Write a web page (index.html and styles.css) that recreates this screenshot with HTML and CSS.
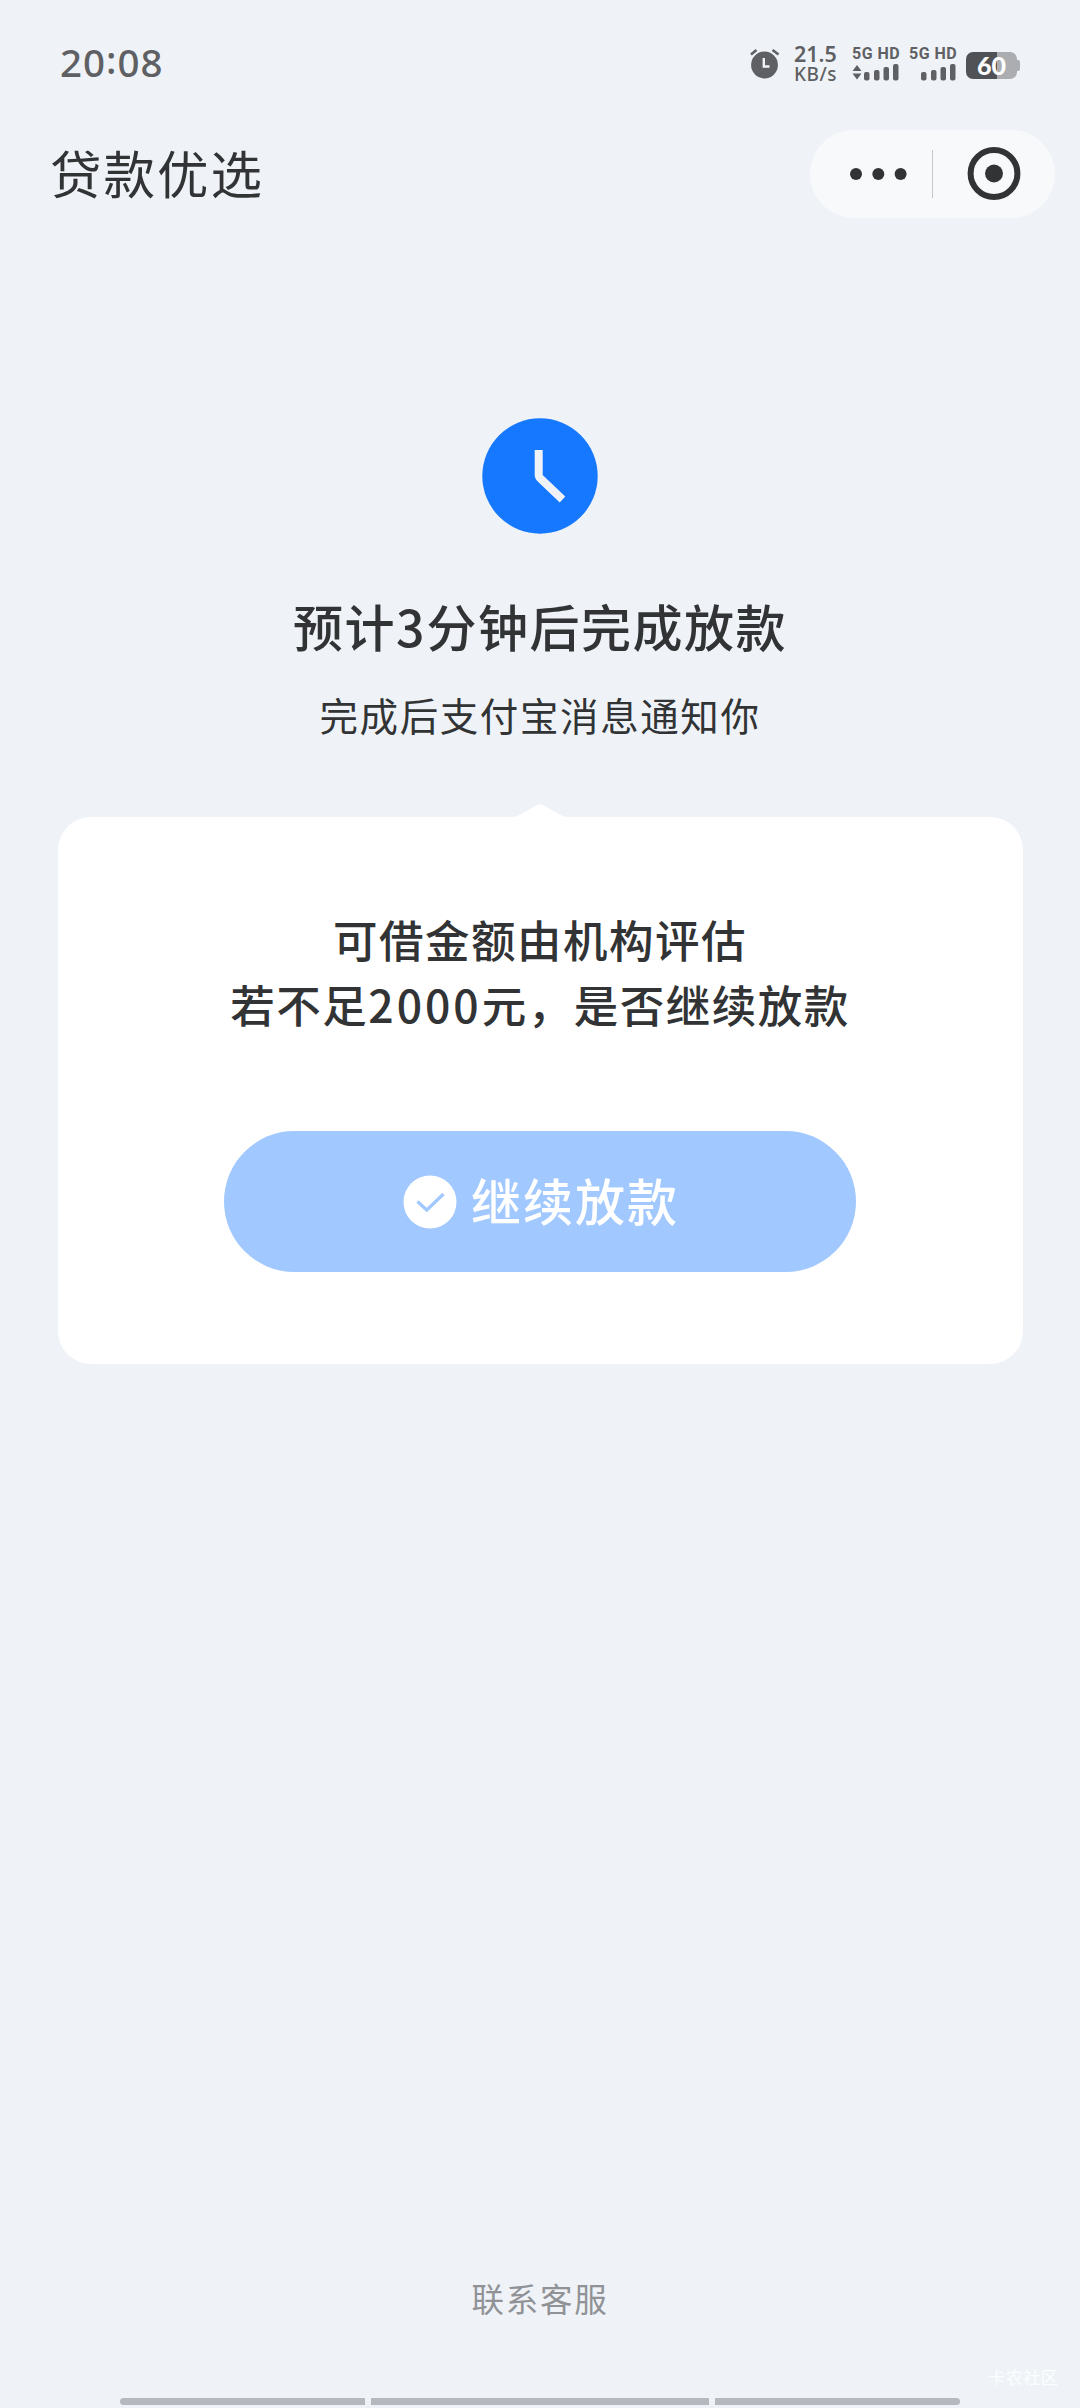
FILE: index.html
```html
<!DOCTYPE html>
<html lang="zh-CN">
<head>
<meta charset="utf-8">
<title>贷款优选</title>
<link rel="stylesheet" href="styles.css">
</head>
<body>
<div class="screen">
  <header class="status">
    <span class="time">20<span class="colon">:</span>08</span>
    <div class="indicators">
      <svg class="alarm" width="30" height="30" viewBox="0 0 30 30">
        <circle cx="14.500" cy="16" r="13.400" fill="#5f6063"/>
        <path d="M1 5.500 L6.500 1 M22.500 1 L28.500 5.500" stroke="#5f6063" stroke-width="2.600" fill="none"/>
        <path d="M13.800 9 V17.500 H19.500" stroke="#eff3f8" stroke-width="2.400" fill="none"/>
      </svg>
      <div class="speed"><span class="rate">21.5</span><span class="unit">KB/s</span></div>
      <div class="sim">
        <span class="net">5G HD</span>
        <svg width="48" height="18" viewBox="0 0 48 18" fill="#5f6063">
          <path d="M0.500 8 L5 2 L9.500 8 Z M0.500 10.500 L5 16.500 L9.500 10.500 Z"/>
          <rect x="12" y="9" width="5.500" height="8.500" rx="2"/><rect x="22" y="7" width="5.500" height="10.500" rx="2"/><rect x="31.500" y="4" width="5.500" height="13.500" rx="2"/><rect x="41" y="1" width="5.500" height="16.500" rx="2"/>
        </svg>
      </div>
      <div class="sim second">
        <span class="net">5G HD</span>
        <svg width="48" height="18" viewBox="0 0 48 18" fill="#5f6063">
          <rect x="12" y="9" width="5.500" height="8.500" rx="2"/><rect x="22" y="7" width="5.500" height="10.500" rx="2"/><rect x="31.500" y="4" width="5.500" height="13.500" rx="2"/><rect x="41" y="1" width="5.500" height="16.500" rx="2"/>
        </svg>
      </div>
      <div class="battery"><span class="cell">60</span><span class="tip"></span></div>
    </div>
  </header>

  <nav class="titlebar">
    <h1 class="title">贷款优选</h1>
    <div class="capsule">
      <svg width="57" height="12" viewBox="0 0 57 12" fill="#323335"><circle cx="6" cy="6" r="6"/><circle cx="28.300" cy="6" r="6"/><circle cx="50.600" cy="6" r="6"/></svg>
      <span class="divider"></span>
      <svg width="54" height="54" viewBox="0 0 54 54"><circle cx="27" cy="26.500" r="23.400" fill="none" stroke="#323335" stroke-width="6"/><circle cx="27" cy="26.500" r="9" fill="#323335"/></svg>
    </div>
  </nav>

  <main class="content">
    <svg class="clock" width="116" height="116" viewBox="0 0 116 116">
      <circle cx="58" cy="58" r="57.700" fill="#1677ff"/>
      <path d="M56.700 32 V57 Q56.700 59 58.500 60.500 L80.500 81.500" fill="none" stroke="#eff3f8" stroke-width="8"/>
    </svg>
    <h2 class="headline">预计<span class="digit">3</span>分钟后完成放款</h2>
    <p class="sub">完成后支付宝消息通知你</p>
    <svg class="pointer" width="52" height="13" viewBox="0 0 50 13" preserveAspectRatio="none"><path d="M0 13 Q4 12 8 9.500 L22 1 Q25 -0.500 28 1 L42 9.500 Q46 12 50 13 Z" fill="#fff"/></svg>
    <section class="card">
      <p class="question">可借金额由机构评估<br>若不足<span class="amount">2000</span>元，是否继续放款</p>
      <button class="confirm" type="button">
        <svg width="54" height="54" viewBox="0 0 54 54"><circle cx="27" cy="27" r="26.500" fill="#fff"/><path d="M14.500 26.500 L23.800 35 L40.500 19" fill="none" stroke="#a1c8ff" stroke-width="3.200"/></svg>
        <span class="label">继续放款</span>
      </button>
    </section>
  </main>

  <footer class="footer">
    <a class="service">联系客服</a>
    <span class="mark">卡农社区</span>
    <div class="gesture"><i class="side left"></i><i class="mid"></i><i class="side right"></i></div>
  </footer>
</div>
</body>
</html>
```
FILE: styles.css
```css
* { box-sizing: border-box; margin: 0; padding: 0; }
body { background: #eff3f8; color: #323335; font-family: "Noto Sans CJK SC", sans-serif; }
.screen { width: 1080px; height: 2408px; display: flex; flex-direction: column; overflow: hidden; }
svg { display: block; flex: none; }

.status { height: 130px; padding: 0 60px 0 60px; display: flex; justify-content: space-between; color: #5f6063; }
.time { margin-top: 36px; font: 500 38.500px/52px "Noto Sans", sans-serif; letter-spacing: 1px; white-space: nowrap; }
.colon { display: inline-block; transform: translateY(-3px); }
.indicators { display: flex; align-items: flex-start; }
.alarm { margin-top: 49px; }
.speed { width: 45px; margin: 44px 0 0 14px; display: flex; flex-direction: column; font-family: "Noto Sans", sans-serif; font-weight: 600; white-space: nowrap; }
.rate { font-size: 21.500px; line-height: 20px; }
.unit { font-size: 19px; line-height: 20px; font-weight: 500; letter-spacing: 0.500px; }
.sim { width: 48px; margin: 46px 0 0 13px; }
.sim.second { margin-left: 9px; }
.net { display: block; height: 17px; font: 700 16px/15px Roboto, sans-serif; letter-spacing: 0.500px; white-space: nowrap; }
.battery { margin: 52px 0 0 9px; display: flex; align-items: center; }
.cell { width: 51px; height: 27px; border-radius: 7px; background: linear-gradient(90deg, #515255 0 31px, #abadb1 31px); color: #fff; font: 900 25px/27px Lato, sans-serif; text-align: center; }
.tip { width: 3px; height: 11px; border-radius: 0 2px 2px 0; background: #abadb1; }

.titlebar { height: 88px; padding: 0 25px 0 50px; display: flex; align-items: center; justify-content: space-between; }
.title { margin-bottom: 5px; font-size: 51.500px; line-height: 76px; font-weight: 400; letter-spacing: 2px; white-space: nowrap; }
.capsule { width: 245px; height: 88px; padding-left: 40px; border-radius: 44px; background: #f8f9fb; display: flex; align-items: center; }
.divider { width: 1px; height: 48px; margin: 0 34px 0 25px; background: #c4c6c9; }

.content { display: flex; flex-direction: column; align-items: center; }
.clock { margin-top: 200px; }
.headline { margin-top: 55px; font-size: 50px; line-height: 72px; font-weight: 500; letter-spacing: 1.500px; white-space: nowrap; }
.digit { letter-spacing: 2px; }
.sub { margin-top: 25px; font-size: 38.500px; line-height: 56px; letter-spacing: 1.600px; white-space: nowrap; }
.pointer { margin-top: 62px; }
.card { width: 965px; height: 547px; padding-top: 89px; border-radius: 33px; background: #fff; display: flex; flex-direction: column; align-items: center; }
.question { font-size: 44.500px; line-height: 65px; font-weight: 500; letter-spacing: 1.500px; text-align: center; white-space: nowrap; }
.amount { letter-spacing: 3px; }
.confirm { width: 632px; height: 141px; margin-top: 95px; border: 0; border-radius: 71px; background: #a1c8ff; color: #fff; display: flex; align-items: center; justify-content: center; gap: 14px; }
.label { margin: 0 -2px 5px 0; font: 500 50px/74px "Noto Sans CJK SC", sans-serif; letter-spacing: 2px; white-space: nowrap; }

.footer { margin-top: auto; height: 148px; display: flex; flex-direction: column; align-items: center; }
.service { margin-top: 14px; font-size: 32.500px; line-height: 48px; letter-spacing: 1.700px; color: #909296; }
.mark { align-self: flex-end; margin: 43px 22px 0 0; font-size: 17.500px; line-height: 24px; color: #fcfdfe; }
.gesture { display: flex; gap: 6px; margin-top: 9px; }
.gesture i { height: 7px; background: #b5b9bf; }
.side { width: 245px; }
.mid { width: 338px; }
.left { border-radius: 4px 0 0 4px; }
.right { border-radius: 0 4px 4px 0; }
```
